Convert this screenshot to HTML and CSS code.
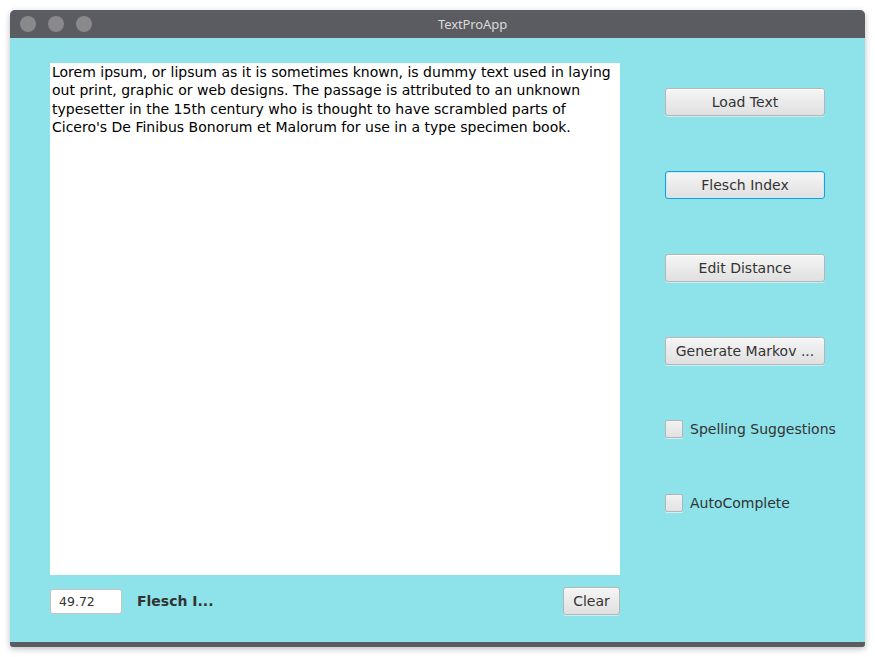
FILE: index.html
```html
<!DOCTYPE html>
<html>
<head>
<meta charset="utf-8">
<link rel="stylesheet" href="styles.css">
</head>
<body>
<div class="window">
  <div class="titlebar">
    <div class="lights">
      <span class="light"></span><span class="light"></span><span class="light"></span>
    </div>
    <div class="title">TextProApp</div>
  </div>
  <div class="content">
    <div class="left">
      <div class="textarea">Lorem ipsum, or lipsum as it is sometimes known, is dummy text used in laying out print, graphic or web designs. The passage is attributed to an unknown typesetter in the 15th century who is thought to have scrambled parts of Cicero's De Finibus Bonorum et Malorum for use in a type specimen book.</div>
      <div class="bottom">
        <div class="field">49.72</div>
        <div class="label">Flesch I...</div>
        <div class="spacer"></div>
        <button class="btn clear">Clear</button>
      </div>
    </div>
    <div class="right">
      <button class="btn side first">Load Text</button>
      <button class="btn side focused">Flesch Index</button>
      <button class="btn side">Edit Distance</button>
      <button class="btn side">Generate Markov ...</button>
      <label class="check c1"><span class="box"></span><span>Spelling Suggestions</span></label>
      <label class="check c2"><span class="box"></span><span>AutoComplete</span></label>
    </div>
  </div>
  <div class="bottombar"></div>
</div>
</body>
</html>
```

FILE: styles.css
```css
html, body {
  margin: 0;
  padding: 0;
  background: #ffffff;
  width: 875px;
  height: 657px;
  overflow: hidden;
}
body {
  font-family: "DejaVu Sans", sans-serif;
}
.window {
  margin: 10px 0 0 10px;
  width: 855px;
  height: 637px;
  display: flex;
  flex-direction: column;
  border-radius: 5px 5px 3px 3px;
  overflow: hidden;
  box-shadow: 0 2px 6px rgba(0,0,0,0.25);
  background: #8ee2e9;
}
.titlebar {
  height: 28px;
  background: #5b5c61;
  display: flex;
  align-items: center;
  flex-shrink: 0;
}
.lights {
  display: flex;
  gap: 12px;
  padding-left: 10px;
}
.light {
  width: 16px;
  height: 16px;
  border-radius: 50%;
  background: #8a8a8d;
}
.title {
  margin-left: 346px;
  font-family: "Noto Sans", "Open Sans", sans-serif;
  font-size: 13px;
  color: #d9d9db;
  letter-spacing: -0.1px;
}
.content {
  flex: 1;
  display: flex;
  padding: 25px 0 0 40px;
}
.left {
  width: 570px;
  display: flex;
  flex-direction: column;
}
.textarea {
  height: 512px;
  background: #ffffff;
  padding: 0 4px 0 2px;
  box-sizing: border-box;
  font-size: 14px;
  line-height: 18.3px;
  color: #000;
}
.bottom {
  display: flex;
  align-items: center;
  margin-top: 12px;
  height: 28px;
}
.field {
  width: 72px;
  height: 25px;
  box-sizing: border-box;
  background: #fff;
  border: 1px solid #c4c4c4;
  border-radius: 3px;
  font-size: 12.5px;
  color: #333;
  padding-left: 8px;
  line-height: 23px;
}
.label {
  margin-left: 15px;
  font-weight: bold;
  font-size: 14px;
  color: #333;
}
.spacer { flex: 1; }
.btn {
  font-family: "DejaVu Sans", sans-serif;
  font-size: 14px;
  color: #333;
  background: linear-gradient(#f5f5f5, #e0e0e0);
  border: 1px solid #b6b6b6;
  border-radius: 3px;
  box-shadow: inset 0 1px 0 #ffffff, 0 1px 0 rgba(255,255,255,0.5);
  padding: 0;
  box-sizing: border-box;
}
.clear {
  width: 57px;
  height: 28px;
}
.right {
  margin-left: 45px;
  display: flex;
  flex-direction: column;
  align-items: flex-start;
}
.side {
  width: 160px;
  height: 28px;
  margin-top: 55px;
}
.side.first {
  margin-top: 25px;
}
.side.focused {
  border: 1px solid #1a9fd6;
  box-shadow: inset 0 0 0 1px #cdebf6;
}
.check {
  display: flex;
  align-items: center;
  gap: 7px;
  font-size: 14px;
  color: #333;
  height: 19px;
  white-space: nowrap;
}
.c1 { margin-top: 54px; }
.c2 { margin-top: 55px; }
.box {
  width: 18px;
  height: 18px;
  box-sizing: border-box;
  border: 1px solid #b4b4b4;
  border-radius: 2px;
  background: linear-gradient(#f2f2f2, #e2e2e2);
  box-shadow: 0 1px 0 rgba(255,255,255,0.6);
}
.bottombar {
  height: 5px;
  background: #5b5c61;
  flex-shrink: 0;
}
```
